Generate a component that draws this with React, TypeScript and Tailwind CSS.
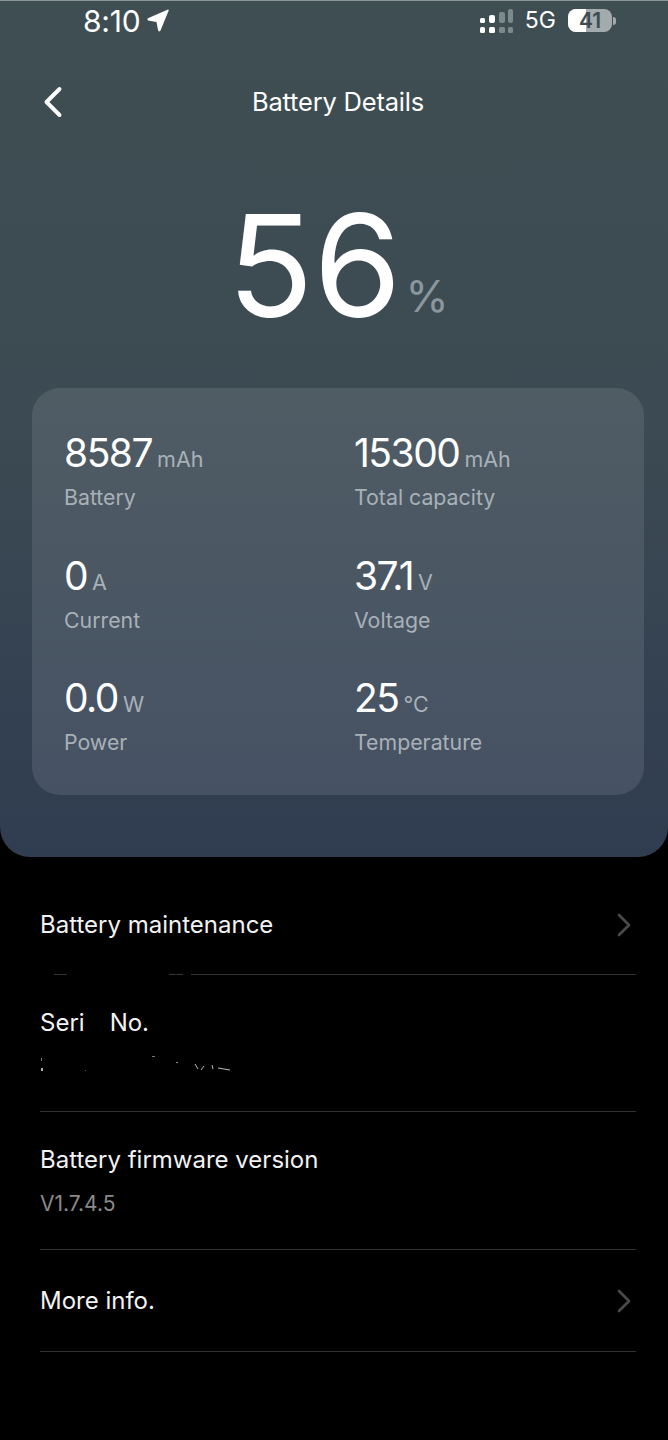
import { ChevronLeft, ChevronRight } from "lucide-react";

const stats = [
  { value: "8587", unit: "mAh", label: "Battery" },
  { value: "15300", unit: "mAh", label: "Total capacity" },
  { value: "0", unit: "A", label: "Current" },
  { value: "37.1", unit: "V", label: "Voltage" },
  { value: "0.0", unit: "W", label: "Power" },
  { value: "25", unit: "°C", label: "Temperature" },
];

function SignalIcon() {
  return (
    <svg width="33" height="24" viewBox="0 0 33 24" className="block">
      <rect x="0" y="9" width="5" height="5" rx="1.500" fill="#fff" />
      <rect x="0" y="18" width="5" height="6" rx="1.500" fill="#fff" />
      <rect x="9" y="6" width="6" height="8" rx="2" fill="#fff" />
      <rect x="9" y="18" width="6" height="6" rx="1.500" fill="#fff" />
      <rect x="19" y="3" width="6" height="11" rx="2" fill="#7d8a8d" />
      <rect x="19" y="18" width="6" height="6" rx="1.500" fill="#7d8a8d" />
      <rect x="28" y="0" width="5" height="14" rx="2" fill="#7d8a8d" />
      <rect x="28" y="18" width="5" height="6" rx="1.500" fill="#7d8a8d" />
    </svg>
  );
}

function StatusBar() {
  return (
    <div className="flex h-[39px] items-center justify-between pl-[83px] pr-[52px] text-white">
      <div className="flex items-center gap-[6px]">
        <span className="text-[30px] leading-none tracking-[-0.2px]">8:10</span>
        <svg width="22" height="23" viewBox="0 0 22 23" className="block">
          <path d="M21 0.500 Q22 0.500 21.500 2 L13.500 21.500 Q12 23.500 11 21 L9.500 13 L1 11.500 Q-0.500 10 1.500 9 Z" fill="#fff" />
        </svg>
      </div>
      <div className="flex items-center">
        <SignalIcon />
        <span className="ml-[12px] text-[23px] leading-none">5G</span>
        <div className="ml-[12px] flex items-center">
          <div className="relative flex h-[23px] w-[44px] items-center justify-center overflow-hidden rounded-[8px] bg-[#a3abad]">
            <div className="absolute inset-y-0 left-0 w-[18px] bg-white" />
            <span className="relative text-[21px] font-semibold leading-none text-[#3e4c50]">41</span>
          </div>
          <div className="ml-[1px] h-[8px] w-[3px] rounded-r-full bg-[#a3abad]" />
        </div>
      </div>
    </div>
  );
}

function StatCell({ value, unit, label }: { value: string; unit: string; label: string }) {
  return (
    <div className="h-[122.500px]">
      <div className="flex h-[47px] items-baseline gap-[5px]">
        <span className="text-[39px] leading-[47px] tracking-[-1.500px] text-white">{value}</span>
        <span className="text-[21.500px] leading-none text-[#a8b1b7]">{unit}</span>
      </div>
      <div className="mt-[7px] text-[21.300px] leading-[28px] text-[#a8b1b7]">{label}</div>
    </div>
  );
}

function Divider() {
  return <div className="h-px bg-[#333333]" />;
}

export default function App() {
  return (
    <div className="h-[1440px] w-[668px] overflow-hidden bg-black font-['Inter',sans-serif]">
      {/* Header panel */}
      <div className="h-[857px] rounded-b-[30px] border-t border-[#8b9496] bg-gradient-to-b from-[#3f4e52] via-[#3c4a53] to-[#303c50]">
        <StatusBar />

        <div className="relative mt-[40px] flex h-[44px] items-center justify-center pl-[8px] text-white">
          <ChevronLeft className="absolute left-[27px]" size={52} strokeWidth={1.800} />
          <h1 className="text-[25.500px] font-normal leading-none tracking-[-0.2px]">Battery Details</h1>
        </div>

        <div className="mt-[76px] flex h-[130px] items-end justify-center pl-[8px]">
          <span className="text-[142px] font-[380] leading-[130px] text-white">56</span>
          <span className="ml-[4px] pb-[12px] text-[44px] font-normal leading-none text-[#8b979e]">%</span>
        </div>

        <div className="ml-[32px] mr-[24px] mt-[58px] grid h-[407px] grid-cols-[290px_1fr] rounded-[28px] bg-gradient-to-b from-[#4f5c64] to-[#465263] pl-[32px] pt-[41px]">
          {stats.map((s) => (
            <StatCell key={s.label} {...s} />
          ))}
        </div>
      </div>

      {/* List */}
      <div className="ml-[40px] mr-[32px] text-[24px] leading-[32px] text-[#f2f2f2]">
        <div className="flex h-[117px] items-center justify-between pt-[18px]">
          <span>Battery maintenance</span>
          <ChevronRight className="mr-[-8px] text-[#4a4a4a]" size={40} strokeWidth={1.600} />
        </div>

        {/* this divider is partly wiped out in the picture */}
        <div className="flex h-px">
          <div className="w-[14px]" />
          <div className="w-[13px] bg-[#333333]" />
          <div className="w-[102px]" />
          <div className="w-[14px] bg-[#333333]" />
          <div className="w-[8px]" />
          <div className="flex-1 bg-[#333333]" />
        </div>

        <div className="h-[136px] pt-[32px]">
          <div>
            Seri<span className="ml-[25px]">No.</span>
          </div>
          <svg width="200" height="16" viewBox="0 0 200 16" className="mt-[17px] block">
            <rect x="1" y="2" width="1" height="3" fill="#777" />
            <rect x="1" y="12" width="2" height="3" fill="#aaa" />
            <rect x="45" y="14" width="1" height="1" fill="#555" />
            <rect x="112" y="0" width="3" height="1" fill="#777" />
            <rect x="136" y="6" width="2" height="1" fill="#888" />
            <path d="M155 8 L158 13 M164 10 L161 14 M172 9 L173 13 M178 12 L190 14" stroke="#bbb" strokeWidth="1" />
          </svg>
        </div>
        <Divider />

        <div className="flex h-[137px] flex-col justify-center pt-px">
          <div>Battery firmware version</div>
          <div className="mt-[14px] text-[21px] leading-[28px] text-[#8a8a8a]">V1.7.4.5</div>
        </div>
        <Divider />

        <div className="flex h-[101px] items-center justify-between">
          <span>More info.</span>
          <ChevronRight className="mr-[-8px] text-[#4a4a4a]" size={40} strokeWidth={1.600} />
        </div>
        <Divider />
      </div>
    </div>
  );
}
